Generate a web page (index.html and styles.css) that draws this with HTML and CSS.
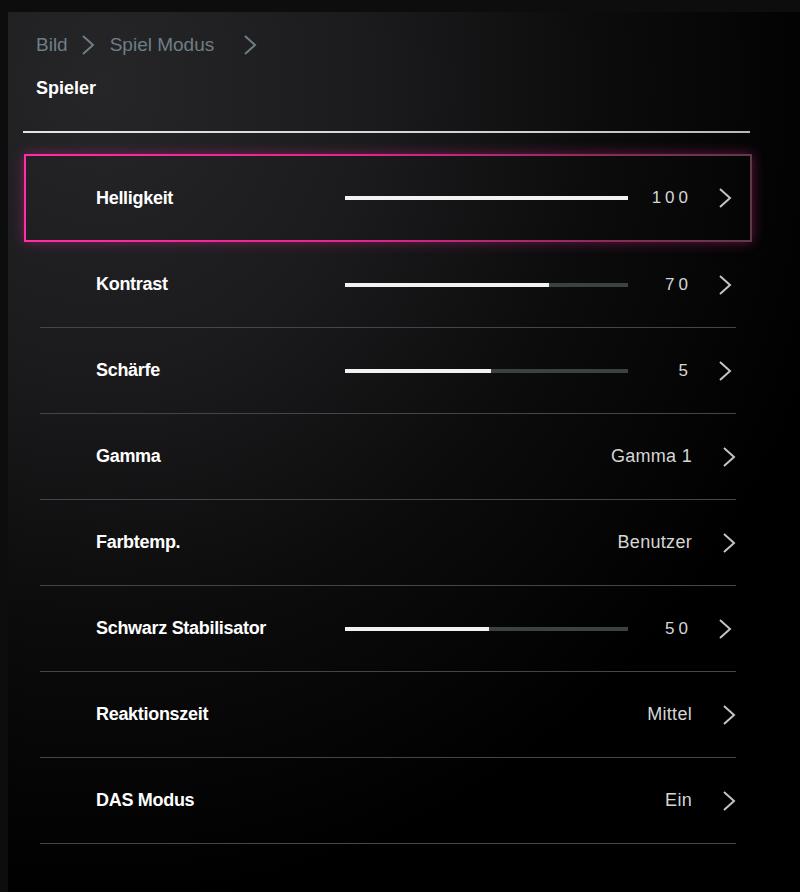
FILE: index.html
```html
<!DOCTYPE html>
<html lang="de">
<head>
<meta charset="utf-8">
<title>Spiel Modus – Spieler</title>
<link rel="stylesheet" href="styles.css">
</head>
<body>
<div class="panel">
  <div class="crumbs">
    <span>Bild</span>
    <svg class="crumb-chev" viewBox="0 0 14 22" width="14" height="22"><polyline points="2,2 12,11 2,20"/></svg>
    <span>Spiel Modus</span>
    <svg class="crumb-chev crumb-chev-last" viewBox="0 0 14 22" width="14" height="22"><polyline points="2,2 12,11 2,20"/></svg>
  </div>
  <div class="title">Spieler</div>
  <div class="rule"></div>

  <div class="list">
    <div class="row selected">
      <span class="label">Helligkeit</span>
      <div class="slider"><div class="fill" style="width:100%"></div></div>
      <span class="value num">100</span>
      <svg class="chev" viewBox="0 0 14 22" width="14" height="22"><polyline points="2,2 12,11 2,20"/></svg>
    </div>
    <div class="row">
      <span class="label">Kontrast</span>
      <div class="slider"><div class="fill" style="width:72%"></div></div>
      <span class="value num">70</span>
      <svg class="chev" viewBox="0 0 14 22" width="14" height="22"><polyline points="2,2 12,11 2,20"/></svg>
    </div>
    <div class="row">
      <span class="label">Schärfe</span>
      <div class="slider"><div class="fill" style="width:51.5%"></div></div>
      <span class="value num">5</span>
      <svg class="chev" viewBox="0 0 14 22" width="14" height="22"><polyline points="2,2 12,11 2,20"/></svg>
    </div>
    <div class="row">
      <span class="label">Gamma</span>
      <span class="spacer"></span>
      <span class="value">Gamma 1</span>
      <svg class="chev" viewBox="0 0 14 22" width="14" height="22"><polyline points="2,2 12,11 2,20"/></svg>
    </div>
    <div class="row">
      <span class="label">Farbtemp.</span>
      <span class="spacer"></span>
      <span class="value">Benutzer</span>
      <svg class="chev" viewBox="0 0 14 22" width="14" height="22"><polyline points="2,2 12,11 2,20"/></svg>
    </div>
    <div class="row">
      <span class="label">Schwarz Stabilisator</span>
      <div class="slider"><div class="fill" style="width:51%"></div></div>
      <span class="value num">50</span>
      <svg class="chev" viewBox="0 0 14 22" width="14" height="22"><polyline points="2,2 12,11 2,20"/></svg>
    </div>
    <div class="row">
      <span class="label">Reaktionszeit</span>
      <span class="spacer"></span>
      <span class="value">Mittel</span>
      <svg class="chev" viewBox="0 0 14 22" width="14" height="22"><polyline points="2,2 12,11 2,20"/></svg>
    </div>
    <div class="row">
      <span class="label">DAS Modus</span>
      <span class="spacer"></span>
      <span class="value">Ein</span>
      <svg class="chev" viewBox="0 0 14 22" width="14" height="22"><polyline points="2,2 12,11 2,20"/></svg>
    </div>
  </div>
</div>
</body>
</html>
```

FILE: styles.css
```css
html, body {
  margin: 0;
  padding: 0;
  background: #0d0d0e;
  width: 800px;
  height: 892px;
  overflow: hidden;
}

body {
  font-family: "Liberation Sans", Arial, sans-serif;
}

.panel {
  margin: 12px 0 0 8px;
  width: 792px;
  height: 880px;
  box-sizing: border-box;
  padding-top: 21px;
  background:
    radial-gradient(ellipse 760px 820px at 12% 8%, #262629 0%, #1b1b1d 35%, #0c0c0d 65%, #000 100%);
}

.crumbs {
  display: flex;
  align-items: center;
  height: 24px;
  padding-left: 28px;
  font-size: 19px;
  color: #6e7e85;
}

.crumb-chev {
  margin: 0 15px 0 13px;
  fill: none;
  stroke: #6e7e85;
  stroke-width: 2;
}

.crumb-chev-last {
  margin-left: 29px;
}

.title {
  margin-top: 19px;
  height: 24px;
  line-height: 24px;
  padding-left: 28px;
  font-size: 18px;
  font-weight: bold;
  color: #ffffff;
}

.rule {
  margin: 31px 0 0 15px;
  width: 727px;
  height: 2px;
  background: linear-gradient(to right, #e6e6e6, #d0d0d0 70%, #b8b8b8);
}

.list {
  margin-top: 21px;
}

.row {
  display: flex;
  align-items: center;
  box-sizing: border-box;
  height: 86px;
  margin-left: 32px;
  width: 696px;
  padding-left: 56px;
  border-bottom: 1px solid #3c4849;
}

.row.selected {
  margin-left: 16px;
  width: 728px;
  height: 88px;
  padding-left: 70px;
  padding-right: 14px;
  border: 2px solid #e0208a;
  border-image: linear-gradient(to right, #ff2ea6, #e42590 45%, #8a2c5a 80%, #5e3a46) 1;
  box-shadow: 0 0 12px rgba(235, 40, 150, 0.4);
}

.label {
  width: 249px;
  flex: none;
  font-size: 18px;
  font-weight: bold;
  color: #ffffff;
  letter-spacing: -0.3px;
  white-space: nowrap;
}

.spacer {
  flex: 1;
}

.slider {
  width: 283px;
  height: 4px;
  flex: none;
  background: #3a4242;
}

.fill {
  height: 100%;
  background: #f2f2f2;
}

.value {
  flex: none;
  font-size: 18px;
  color: #d6d6d6;
  text-align: right;
  white-space: nowrap;
  letter-spacing: 0.3px;
}

.slider + .value {
  width: 64px;
}

.value.num {
  font-size: 17px;
  letter-spacing: 4px;
  margin-right: -4px;
}

.chev {
  flex: none;
  margin-left: 30px;
  fill: none;
  stroke: #c4c4c4;
  stroke-width: 2;
}
```
